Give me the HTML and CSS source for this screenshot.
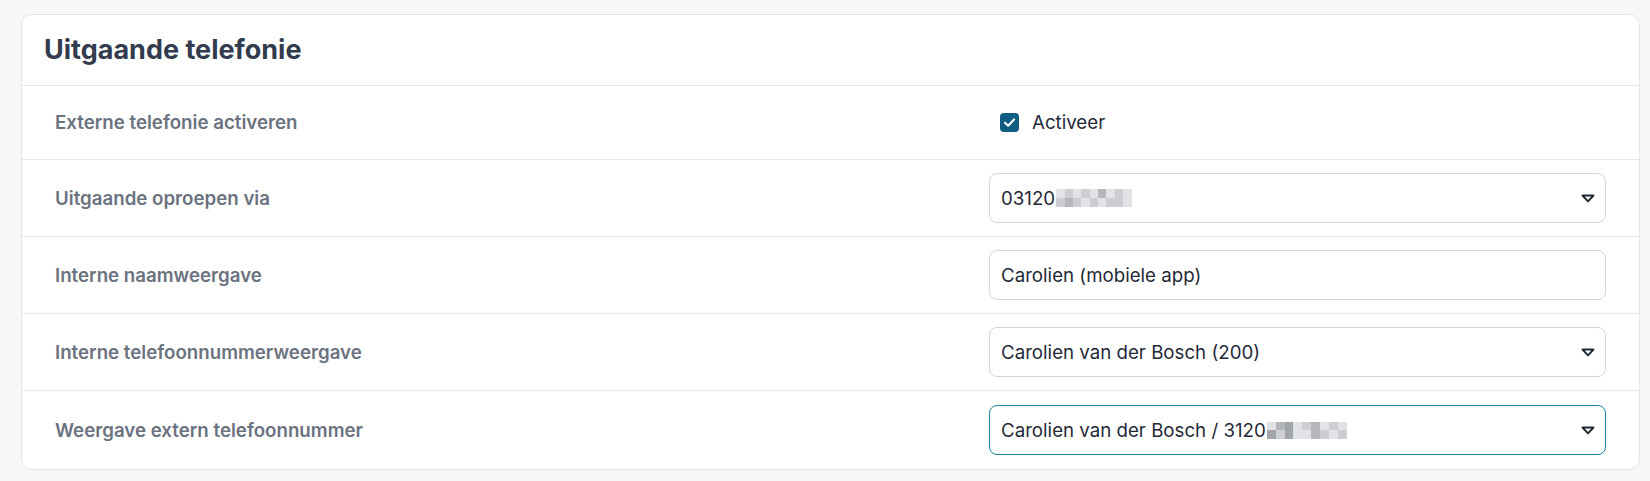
FILE: index.html
```html
<!DOCTYPE html>
<html lang="nl">
<head>
<meta charset="utf-8">
<title>Uitgaande telefonie</title>
<link rel="stylesheet" href="styles.css">
</head>
<body>
<section class="card">
  <header class="card-header">
    <h2 class="card-title">Uitgaande telefonie</h2>
  </header>
  <div class="row row-first">
    <div class="label">Externe telefonie activeren</div>
    <div class="field">
      <label class="check">
        <span class="check-box">
          <svg viewBox="0 0 20 20" width="19" height="19"><path d="M5.2 10.2 L8.6 13.4 L14.8 6.8" fill="none" stroke="#fff" stroke-width="2.2" stroke-linecap="round" stroke-linejoin="round"/></svg>
        </span>
        <span class="check-text">Activeer</span>
      </label>
    </div>
  </div>
  <div class="row">
    <div class="label">Uitgaande oproepen via</div>
    <div class="field">
      <div class="input select">
        <span class="value">03120<span class="blur b1"><i class="l"></i><i class="m"></i><i class="l"></i><i class="m"></i><i class="l"></i><i class="d"></i><i class="l"></i><i class="m"></i><i class="l"></i><i class="m"></i><i class="d"></i><i class="m"></i><i class="l"></i><i class="m"></i><i class="l"></i><i class="m"></i><i class="m"></i><i class="l"></i></span></span>
        <svg class="caret" viewBox="0 0 14 9" width="14" height="9"><path d="M1.5 1.5 H12.5 L7 7.3 Z" fill="none" stroke="#1f2937" stroke-width="1.9" stroke-linejoin="round"/></svg>
      </div>
    </div>
  </div>
  <div class="row">
    <div class="label">Interne naamweergave</div>
    <div class="field">
      <div class="input"><span class="value">Carolien (mobiele app)</span></div>
    </div>
  </div>
  <div class="row">
    <div class="label">Interne telefoonnummerweergave</div>
    <div class="field">
      <div class="input select">
        <span class="value">Carolien van der Bosch (200)</span>
        <svg class="caret" viewBox="0 0 14 9" width="14" height="9"><path d="M1.5 1.5 H12.5 L7 7.3 Z" fill="none" stroke="#1f2937" stroke-width="1.9" stroke-linejoin="round"/></svg>
      </div>
    </div>
  </div>
  <div class="row row-last">
    <div class="label">Weergave extern telefoonnummer</div>
    <div class="field">
      <div class="input select focus">
        <span class="value">Carolien van der Bosch / 3120<span class="blur b2"><i class="l"></i><i class="d"></i><i class="x"></i><i class="l"></i><i class="m"></i><i class="d"></i><i class="l"></i><i class="m"></i><i class="l"></i><i class="x"></i><i class="m"></i><i class="x"></i><i class="l"></i><i class="l"></i><i class="d"></i><i class="m"></i><i class="l"></i><i class="m"></i></span></span>
        <svg class="caret" viewBox="0 0 14 9" width="14" height="9"><path d="M1.5 1.5 H12.5 L7 7.3 Z" fill="none" stroke="#1f2937" stroke-width="1.9" stroke-linejoin="round"/></svg>
      </div>
    </div>
  </div>
</section>
</body>
</html>
```

FILE: styles.css
```css
* { box-sizing: border-box; }

html, body { background: #f6f7f9; }

body {
  margin: 0;
  padding: 14px 10px 0 21px;
  font-family: Inter, "Noto Sans", "Liberation Sans", sans-serif;
  color: #1f2937;
}

.card {
  background: #fff;
  border: 1px solid #e3e5ea;
  border-radius: 11px;
  overflow: hidden;
}

.card-header {
  height: 71px;
  border-bottom: 1px solid #e5e7eb;
  display: flex;
  align-items: center;
  padding: 0 22px 2px;
}

.card-title {
  margin: 0;
  font-size: 27px;
  font-weight: 700;
  color: #323c4e;
}

.row {
  display: grid;
  grid-template-columns: minmax(0, 1fr) 617px;
  align-items: center;
  height: 77px;
  padding: 0 33px;
  border-bottom: 1px solid #e5e7eb;
}

.row-first { height: 74px; }
.row-last { border-bottom: 0; height: 78px; }

.label {
  font-size: 18.7px;
  font-weight: 600;
  color: #6b7280;
}

.field { display: flex; align-items: center; }

.check {
  display: flex;
  align-items: center;
  gap: 13px;
  padding-left: 11px;
}

.check-box {
  width: 19px;
  height: 19px;
  border-radius: 4px;
  background: #0f5d83;
  display: flex;
}

.check-text {
  font-size: 18.7px;
  color: #1f2937;
}

.input {
  width: 100%;
  height: 49.5px;
  border: 1px solid #d3d5db;
  border-radius: 8px;
  display: flex;
  align-items: center;
  justify-content: space-between;
  padding: 0 10px 0 11px;
  font-size: 18.7px;
  color: #1f2937;
}

.input.focus { border-color: #1585a3; }

.value { display: flex; align-items: center; white-space: nowrap; }

.caret { flex: none; margin-top: 1px; }

.blur {
  display: inline-grid;
  grid-template-columns: repeat(9, 8.4px);
  grid-template-rows: repeat(2, 9px);
  margin-left: 1px;
}
.blur.b2 { grid-template-columns: repeat(9, 8.9px); grid-template-rows: repeat(2, 8.5px); }
.blur i { display: block; }
.blur i.l { background: #e2e3e6; }
.blur i.m { background: #cdced3; }
.blur i.d { background: #b4b6bc; }
.blur i.x { background: #a2a4ab; }
```
